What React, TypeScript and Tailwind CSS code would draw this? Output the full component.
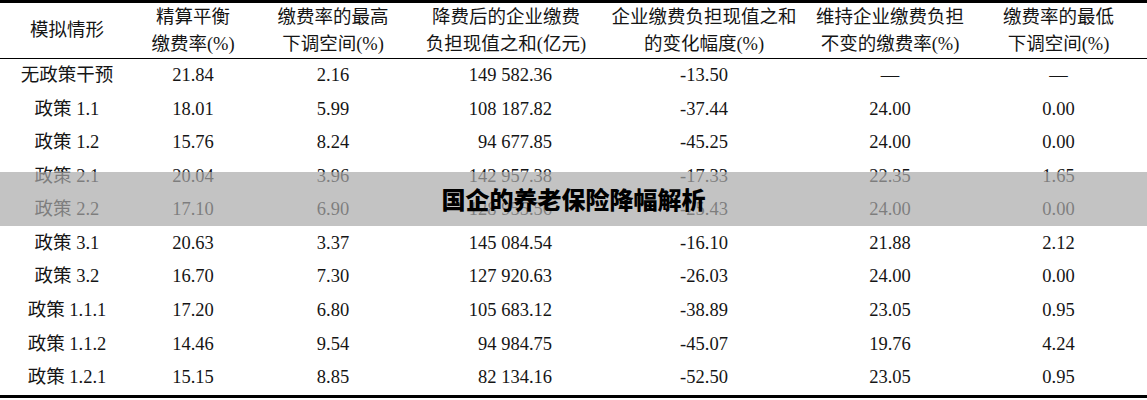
import React from "react";

const headers: string[][] = [
  ["模拟情形"],
  ["精算平衡", "缴费率(%)"],
  ["缴费率的最高", "下调空间(%)"],
  ["降费后的企业缴费", "负担现值之和(亿元)"],
  ["企业缴费负担现值之和", "的变化幅度(%)"],
  ["维持企业缴费负担", "不变的缴费率(%)"],
  ["缴费率的最低", "下调空间(%)"],
];

const rows: string[][] = [
  ["无政策干预", "21.84", "2.16", "149 582.36", "-13.50", "—", "—"],
  ["政策 1.1", "18.01", "5.99", "108 187.82", "-37.44", "24.00", "0.00"],
  ["政策 1.2", "15.76", "8.24", "94 677.85", "-45.25", "24.00", "0.00"],
  ["政策 2.1", "20.04", "3.96", "142 957.38", "-17.33", "22.35", "1.65"],
  ["政策 2.2", "17.10", "6.90", "128 955.56", "-25.43", "24.00", "0.00"],
  ["政策 3.1", "20.63", "3.37", "145 084.54", "-16.10", "21.88", "2.12"],
  ["政策 3.2", "16.70", "7.30", "127 920.63", "-26.03", "24.00", "0.00"],
  ["政策 1.1.1", "17.20", "6.80", "105 683.12", "-38.89", "23.05", "0.95"],
  ["政策 1.1.2", "14.46", "9.54", "94 984.75", "-45.07", "19.76", "4.24"],
  ["政策 1.2.1", "15.15", "8.85", "82 134.16", "-52.50", "23.05", "0.95"],
];

const grid = "grid grid-cols-[134px_118px_162px_184px_212px_160px_177px]";

export default function App() {
  return (
    <div className="relative w-[1147px] h-[400px] bg-white overflow-hidden text-[#151515] font-['Liberation_Serif','Noto_Sans_CJK_SC',serif]">
      <div className="border-t-[3px] border-b-[3px] border-black">
        <div className={`${grid} h-[56px] border-b border-black text-[18.5px] leading-[27px]`}>
          {headers.map((h, i) => (
            <div key={i} className="flex flex-col items-center justify-center whitespace-nowrap">
              {h.map((l, j) => (
                <div key={j}>{l}</div>
              ))}
            </div>
          ))}
        </div>
        {rows.map((r, i) => (
          <div key={i} className={`${grid} h-[33.6px] text-[18.5px]`}>
            {r.map((c, j) => (
              <div
                key={j}
                className={
                  j === 3
                    ? "flex items-center justify-end pr-[46px] whitespace-nowrap"
                    : "flex items-center justify-center whitespace-nowrap"
                }
              >
                {c}
              </div>
            ))}
          </div>
        ))}
      </div>
      <div className="absolute left-0 right-0 top-[172px] h-[54px] bg-[rgba(170,170,170,0.7)] flex items-center justify-center">
        <span className="font-['Noto_Sans_CJK_SC',sans-serif] font-black text-[24px] leading-none text-black">
          国企的养老保险降幅解析
        </span>
      </div>
    </div>
  );
}
